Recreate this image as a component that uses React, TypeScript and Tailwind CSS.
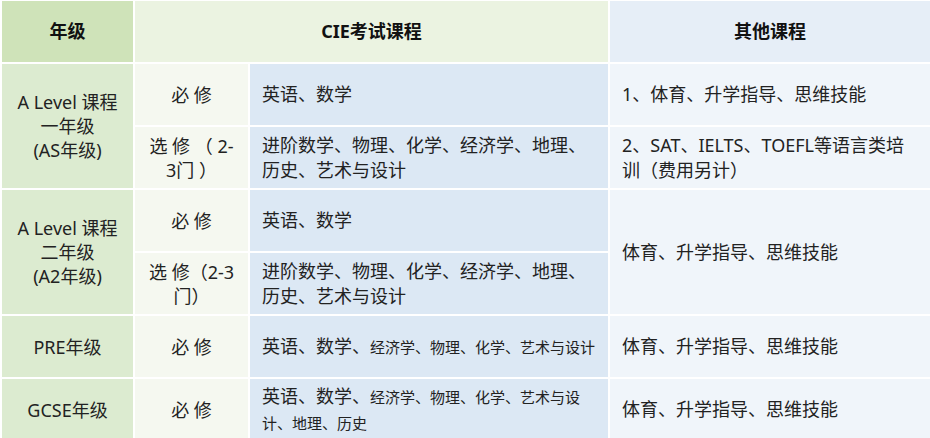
const font = "font-['Noto_Sans','Noto_Sans_CJK_SC',sans-serif]"

const head = 'flex items-center justify-center text-[18px] font-bold text-[#111]'
const gradeCell = 'flex items-center justify-center text-center bg-[#dcebd0] text-[18px] leading-[24px] text-[#222]'
const typeCell = 'flex items-center justify-center text-center bg-[#f5f8f0] text-[18px] leading-[24px] text-[#222]'
const cieCell = 'flex items-center pl-3 pr-2 bg-[#dce8f4] text-[18px] leading-[25px] text-[#222]'
const otherCell = 'flex items-center pl-3 pr-2 bg-[#f0f5fa] text-[18px] leading-[25px] text-[#222]'

export default function App() {
  return (
    <div className={`w-[930px] h-[438px] overflow-hidden bg-white ${font}`}>
      <div className="grid grid-cols-[131px_113px_358px_320px] grid-rows-[61px] auto-rows-[61px] gap-[2px] pl-[2px] pt-[1px]">
        <div className={`${head} bg-[#cfe3b9]`}>年级</div>
        <div className={`${head} col-span-2 bg-[#ebf3e1]`}>CIE考试课程</div>
        <div className={`${head} bg-[#e6eef7]`}>其他课程</div>

        <div className={`${gradeCell} row-span-2`}>
          <div>A Level 课程<br />一年级<br />(AS年级)</div>
        </div>
        <div className={typeCell}>必 修</div>
        <div className={cieCell}>英语、数学</div>
        <div className={otherCell}>1、体育、升学指导、思维技能</div>

        <div className={typeCell}>
          <div>选 修 （ 2-<br />3门 ）</div>
        </div>
        <div className={cieCell}>
          <div>进阶数学、物理、化学、经济学、地理、<br />历史、艺术与设计</div>
        </div>
        <div className={otherCell}>
          <div>2、SAT、IELTS、TOEFL等语言类培<br />训（费用另计）</div>
        </div>

        <div className={`${gradeCell} row-span-2`}>
          <div>A Level 课程<br />二年级<br />(A2年级)</div>
        </div>
        <div className={typeCell}>必 修</div>
        <div className={cieCell}>英语、数学</div>
        <div className={`${otherCell} row-span-2`}>体育、升学指导、思维技能</div>

        <div className={typeCell}>
          <div>选 修（2-3<br />门）</div>
        </div>
        <div className={cieCell}>
          <div>进阶数学、物理、化学、经济学、地理、<br />历史、艺术与设计</div>
        </div>

        <div className={gradeCell}>PRE年级</div>
        <div className={typeCell}>必 修</div>
        <div className={`${cieCell} whitespace-nowrap`}>
          <div>英语、数学、<span className="text-[15px]">经济学、物理、化学、艺术与设计</span></div>
        </div>
        <div className={otherCell}>体育、升学指导、思维技能</div>

        <div className={gradeCell}>GCSE年级</div>
        <div className={typeCell}>必 修</div>
        <div className={`${cieCell} leading-[23px]`}>
          <div>英语、数学、<span className="text-[15px]">经济学、物理、化学、艺术与设</span><br /><span className="text-[15px]">计、地理、历史</span></div>
        </div>
        <div className={otherCell}>体育、升学指导、思维技能</div>
      </div>
    </div>
  )
}
